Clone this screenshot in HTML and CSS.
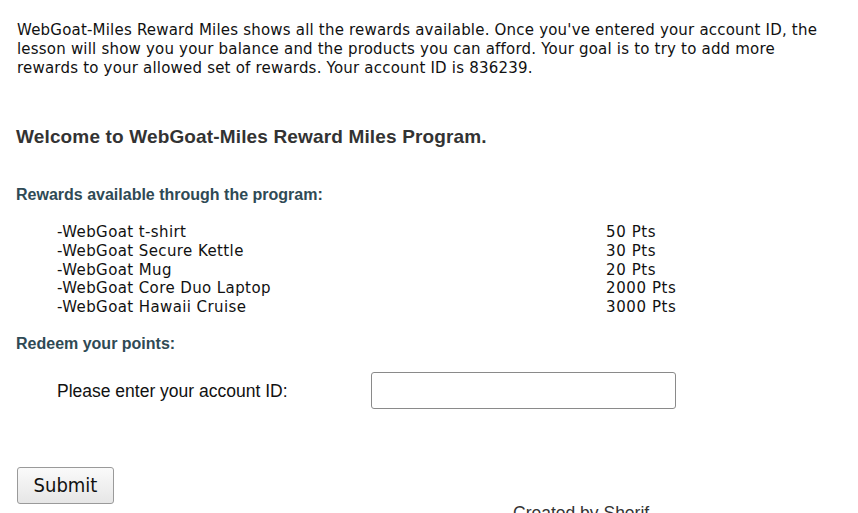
FILE: index.html
```html
<!DOCTYPE html>
<html>
<head>
<meta charset="utf-8">
<link rel="stylesheet" href="styles.css">
</head>
<body>
<div class="page">
  <p class="intro">WebGoat-Miles Reward Miles shows all the rewards available. Once you've entered your account ID, the lesson will show you your balance and the products you can afford. Your goal is to try to add more rewards to your allowed set of rewards. Your account ID is 836239.</p>
  <h1 class="welcome">Welcome to WebGoat-Miles Reward Miles Program.</h1>
  <h2 class="section">Rewards available through the program:</h2>
  <div class="rewards">
    <div class="item">-WebGoat t-shirt</div><div class="pts">50 Pts</div>
    <div class="item">-WebGoat Secure Kettle</div><div class="pts">30 Pts</div>
    <div class="item">-WebGoat Mug</div><div class="pts">20 Pts</div>
    <div class="item">-WebGoat Core Duo Laptop</div><div class="pts">2000 Pts</div>
    <div class="item">-WebGoat Hawaii Cruise</div><div class="pts">3000 Pts</div>
  </div>
  <h2 class="section redeem">Redeem your points:</h2>
  <div class="form-row">
    <label class="label" for="acct">Please enter your account ID:</label>
    <input class="acct" id="acct" type="text">
  </div>
  <button class="submit" type="button">Submit</button>
  <div class="credit">Created by Sherif</div>
</div>
</body>
</html>
```
FILE: styles.css
```css
html, body {
  margin: 0;
  padding: 0;
  background: #fff;
}
body {
  font-family: "DejaVu Sans", sans-serif;
  font-size: 15px;
  color: #111;
  overflow: hidden;
}
.page {
  padding: 21px 17px 0 17px;
}
.intro {
  margin: 0;
  line-height: 19px;
  width: 810px;
  letter-spacing: 0.2px;
}
.welcome {
  margin: 48px 0 0 -1px;
  font-family: "Liberation Sans", Arial, sans-serif;
  font-weight: bold;
  font-size: 19px;
  line-height: 22px;
  letter-spacing: 0.15px;
  color: #333;
}
.section {
  margin: 38px 0 0 -1px;
  font-family: "Liberation Sans", Arial, sans-serif;
  font-weight: bold;
  font-size: 16px;
  line-height: 18px;
  color: #2f4a55;
}
.rewards {
  display: grid;
  grid-template-columns: 549px auto;
  margin: 19px 0 0 40px;
  line-height: 18.75px;
}
.item {
  letter-spacing: 0.4px;
}
.pts {
  letter-spacing: 0.6px;
}
.section.redeem {
  margin-top: 18px;
}
.form-row {
  display: flex;
  align-items: center;
  margin: 19px 0 0 40px;
}
.label {
  width: 314px;
  font-family: "Liberation Sans", Arial, sans-serif;
  font-size: 17.5px;
  color: #111;
  position: relative;
  top: 1px;
}
.acct {
  box-sizing: border-box;
  width: 305px;
  height: 37px;
  margin: 0;
  border: 1px solid #8a8a8a;
  border-radius: 3px;
  background: #fff;
  padding: 0 6px;
}
.submit {
  display: block;
  margin: 58px 0 0 0;
  box-sizing: border-box;
  width: 97px;
  height: 37px;
  border: 1px solid #9a9a9a;
  border-radius: 3px;
  background: linear-gradient(#fafafa, #e6e6e6);
  font-family: "DejaVu Sans Condensed", "DejaVu Sans", sans-serif;
  font-size: 20px;
  color: #111;
  padding: 0;
}
.credit {
  margin: -1px 0 0 496px;
  font-family: "Liberation Sans", Arial, sans-serif;
  font-size: 17.5px;
  color: #333;
}
```
